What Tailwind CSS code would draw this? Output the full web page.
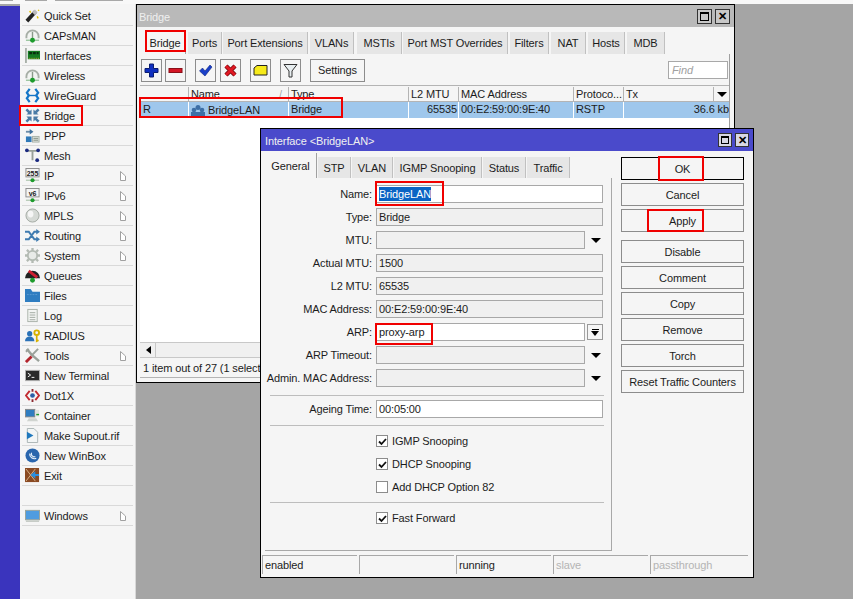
<!DOCTYPE html>
<html lang="en">
<head>
<meta charset="UTF-8">
<title>WinBox Bridge</title>
<script src="https://cdn.jsdelivr.net/npm/@tailwindcss/browser@4"></script>
</head>
<body class="bg-[#a5a5a5]">
<div class="relative w-[853px] h-[599px] overflow-hidden bg-[#a5a5a5] font-['Liberation_Sans',sans-serif] text-[11px] tracking-[-0.12px] leading-[14px] text-[#1c1c1c]">

  <!-- top strip -->
  <div class="h-[4px] bg-[#f8f8f8] flex items-start">
    <div class="w-[13px] h-[1px] bg-[#a8a8a8]"></div>
    <div class="w-[22px] h-[1px] ml-[12px] bg-[#a8a8a8]"></div>
    <div class="w-[68px] h-[1px] ml-[8px] bg-[#a8a8a8]"></div>
  </div>

  <div class="flex h-[595px]">
    <!-- blue rail -->
    <div class="w-[20px] mt-[2px] bg-[#3a34bd]"></div>
    <!-- main menu -->
    <div class="w-[116px] bg-[#f5f5f5] pt-[2px] px-[2px] border-r border-[#d8d8d8]">
      <div class="flex items-center h-[20px] border-b border-[#d9d9d9] pl-[3px]"><svg class="w-[15px] h-[15px] mr-[4px]" viewBox="0 0 16 16"><path d="M2 14L11 4" stroke="#222" stroke-width="4"/><path d="M9 6l3-3" stroke="#bbb" stroke-width="4"/><path d="M13 9l1 2M5 3l1 2M14 2l1 1" stroke="#e5c400" stroke-width="1.5"/></svg>Quick Set</div>
      <div class="flex items-center h-[20px] border-b border-[#d9d9d9] pl-[3px]"><svg class="w-[15px] h-[15px] mr-[4px]" viewBox="0 0 16 16"><path d="M1.500 11V9a6.500 6.500 0 0 1 13 0v2" fill="#f2f4f2" stroke="#a6aea6" stroke-width="2"/><path d="M8 4v8" stroke="#8a9a8a" stroke-width="1.5"/><path d="M1 13h14" stroke="#6fae74"/><circle cx="8" cy="13" r="2.600" fill="#1d9b2c"/></svg>CAPsMAN</div>
      <div class="flex items-center h-[20px] border-b border-[#d9d9d9] pl-[3px]"><svg class="w-[15px] h-[15px] mr-[4px]" viewBox="0 0 16 16"><path d="M1 0v16" stroke="#a8b0a8" stroke-width="2"/><rect x="3" y="3" width="13" height="9" fill="#157a22"/><path d="M4.500 5.500h10" stroke="#0a2d10" stroke-width="2.500" stroke-dasharray="3 1"/><path d="M4 11h11" stroke="#c9b13c" stroke-dasharray="1 1"/></svg>Interfaces</div>
      <div class="flex items-center h-[20px] border-b border-[#d9d9d9] pl-[3px]"><svg class="w-[15px] h-[15px] mr-[4px]" viewBox="0 0 16 16"><path d="M1.500 11V9a6.500 6.500 0 0 1 13 0v2" fill="#f2f4f2" stroke="#a6aea6" stroke-width="2"/><path d="M8 4v8" stroke="#8a9a8a" stroke-width="1.5"/><path d="M1 13h14" stroke="#6fae74"/><circle cx="8" cy="13" r="2.600" fill="#1d9b2c"/></svg>Wireless</div>
      <div class="flex items-center h-[20px] border-b border-[#d9d9d9] pl-[3px]"><svg class="w-[15px] h-[15px] mr-[4px]" viewBox="0 0 16 16"><path d="M5 1L2 5l2 3-2 3 3 4M11 1l3 4-2 3 2 3-3 4" fill="none" stroke="#1476c8" stroke-width="2.400"/><path d="M3 8h10" stroke="#1476c8" stroke-width="1.500"/></svg>WireGuard</div>
      <div class="flex items-center h-[20px] border-b border-[#d9d9d9] pl-[3px]"><svg class="w-[15px] h-[15px] mr-[4px]" viewBox="0 0 16 16" fill="#4a7ba6"><path d="M7 7H1.500L3.300 5.200 0.500 2.400 2.400 0.500 5.200 3.300 7 1.500z"/><path d="M9 7h5.500L12.700 5.200 15.500 2.400 13.600 0.500 10.800 3.300 9 1.500z"/><path d="M7 9H1.500L3.300 10.800 0.500 13.600 2.400 15.500 5.200 12.700 7 14.500z"/><path d="M9 9h5.500L12.700 10.800 15.500 13.600 13.600 15.500 10.800 12.700 9 14.500z"/></svg>Bridge</div>
      <div class="flex items-center h-[20px] border-b border-[#d9d9d9] pl-[3px]"><svg class="w-[15px] h-[15px] mr-[4px]" viewBox="0 0 16 16"><path d="M1 4h5" stroke="#6b8ca8" stroke-width="2"/><path d="M5 1l4 3-4 3z" fill="#3d6f9c"/><rect x="1" y="9" width="6" height="6" fill="#2f79b8"/><rect x="8" y="9" width="7" height="6" fill="#dfe5df" stroke="#a8b0a8"/><path d="M9 11h5M9 13h5" stroke="#7d8a7d"/></svg>PPP</div>
      <div class="flex items-center h-[20px] border-b border-[#d9d9d9] pl-[3px]"><svg class="w-[15px] h-[15px] mr-[4px]" viewBox="0 0 16 16"><path d="M2 3h12M8 3v10" stroke="#98a098" stroke-width="2"/><circle cx="2" cy="2.500" r="2" fill="#1b2a80"/><circle cx="14" cy="2.500" r="2" fill="#1b2a80"/><circle cx="13" cy="13" r="2" fill="#1b2a80"/></svg>Mesh</div>
      <div class="flex items-center h-[20px] border-b border-[#d9d9d9] pl-[3px]"><svg class="w-[15px] h-[15px] mr-[4px]" viewBox="0 0 16 16"><rect x="1" y="0.500" width="14" height="9" fill="#f4f4f4" stroke="#8a8a8a"/><text x="8" y="8" font-size="7.500" font-weight="700" text-anchor="middle" fill="#222">255</text><path d="M1 13h14" stroke="#9ab79a"/><circle cx="8" cy="13" r="2.200" fill="#1d9b2c"/></svg>IP<svg class="ml-auto mr-[7px] w-[6px] h-[10px]" viewBox="0 0 6 10"><path d="M0.500 0.500L5.500 5V9.500H0.500z" fill="#fff" stroke="#a0a0a0"/></svg></div>
      <div class="flex items-center h-[20px] border-b border-[#d9d9d9] pl-[3px]"><svg class="w-[15px] h-[15px] mr-[4px]" viewBox="0 0 16 16"><rect x="1" y="0.500" width="14" height="9" fill="#f4f4f4" stroke="#8a8a8a"/><text x="8" y="8" font-size="7.500" font-weight="700" text-anchor="middle" fill="#222">v6</text><path d="M1 13h14" stroke="#9ab79a"/><circle cx="8" cy="13" r="2.200" fill="#1d9b2c"/></svg>IPv6<svg class="ml-auto mr-[7px] w-[6px] h-[10px]" viewBox="0 0 6 10"><path d="M0.500 0.500L5.500 5V9.500H0.500z" fill="#fff" stroke="#a0a0a0"/></svg></div>
      <div class="flex items-center h-[20px] border-b border-[#d9d9d9] pl-[3px]"><svg class="w-[15px] h-[15px] mr-[4px]" viewBox="0 0 16 16"><circle cx="8" cy="8" r="7" fill="#d6dad6" stroke="#a3aaa3"/><ellipse cx="6" cy="6.500" rx="3" ry="3.600" fill="#f6f6f6"/></svg>MPLS<svg class="ml-auto mr-[7px] w-[6px] h-[10px]" viewBox="0 0 6 10"><path d="M0.500 0.500L5.500 5V9.500H0.500z" fill="#fff" stroke="#a0a0a0"/></svg></div>
      <div class="flex items-center h-[20px] border-b border-[#d9d9d9] pl-[3px]"><svg class="w-[15px] h-[15px] mr-[4px]" viewBox="0 0 16 16"><path d="M0 4h4l6 8h3M0 12h4l6-8h3" fill="none" stroke="#3f7bb0" stroke-width="2.200"/><path d="M12 1l4 3-4 3zM12 9l4 3-4 3z" fill="#3f7bb0"/></svg>Routing<svg class="ml-auto mr-[7px] w-[6px] h-[10px]" viewBox="0 0 6 10"><path d="M0.500 0.500L5.500 5V9.500H0.500z" fill="#fff" stroke="#a0a0a0"/></svg></div>
      <div class="flex items-center h-[20px] border-b border-[#d9d9d9] pl-[3px]"><svg class="w-[15px] h-[15px] mr-[4px]" viewBox="0 0 16 16"><circle cx="8" cy="8" r="5" fill="#e8ebe8" stroke="#b3bab3" stroke-width="2"/><path d="M8 0v3M8 13v3M0 8h3M13 8h3M2 2l2 2M12 12l2 2M14 2l-2 2M4 12l-2 2" stroke="#b3bab3" stroke-width="2.500"/></svg>System<svg class="ml-auto mr-[7px] w-[6px] h-[10px]" viewBox="0 0 6 10"><path d="M0.500 0.500L5.500 5V9.500H0.500z" fill="#fff" stroke="#a0a0a0"/></svg></div>
      <div class="flex items-center h-[20px] border-b border-[#d9d9d9] pl-[3px]"><svg class="w-[15px] h-[15px] mr-[4px]" viewBox="0 0 16 16"><path d="M0 11a8 8 0 0 1 16 0z" fill="#222"/><path d="M4 3l9 7" stroke="#cf2030" stroke-width="3"/><circle cx="8" cy="13" r="2.600" fill="#1d9b2c"/></svg>Queues</div>
      <div class="flex items-center h-[20px] border-b border-[#d9d9d9] pl-[3px]"><svg class="w-[15px] h-[15px] mr-[4px]" viewBox="0 0 16 16"><path d="M0 1h6l2 3h8v11H0z" fill="#2f7dc1"/><path d="M2 7h12" stroke="#5b9bd2" stroke-dasharray="2 1"/></svg>Files</div>
      <div class="flex items-center h-[20px] border-b border-[#d9d9d9] pl-[3px]"><svg class="w-[15px] h-[15px] mr-[4px]" viewBox="0 0 16 16"><rect x="3" y="1.500" width="10" height="13" fill="#f3f5f3" stroke="#a8b0a8"/><path d="M5 5h6M5 7.500h6M5 10h6M5 12.500h6" stroke="#a0a8a0"/></svg>Log</div>
      <div class="flex items-center h-[20px] border-b border-[#d9d9d9] pl-[3px]"><svg class="w-[15px] h-[15px] mr-[4px]" viewBox="0 0 16 16"><circle cx="5" cy="6" r="2.800" fill="#2b72b8"/><path d="M0 14a5 5 0 0 1 10 0z" fill="#2b72b8"/><circle cx="12.500" cy="5" r="2.500" fill="none" stroke="#d8b200" stroke-width="2"/><path d="M12.500 8v6l2-1" fill="none" stroke="#d8b200" stroke-width="1.800"/></svg>RADIUS</div>
      <div class="flex items-center h-[20px] border-b border-[#d9d9d9] pl-[3px]"><svg class="w-[15px] h-[15px] mr-[4px]" viewBox="0 0 16 16"><path d="M2 1l5 6 8 7" stroke="#9aa19a" stroke-width="2.500" fill="none"/><path d="M1 4l3-3" stroke="#9aa19a" stroke-width="2"/><path d="M14 1L7 8" stroke="#9aa19a" stroke-width="2"/><path d="M7 9l-6 6" stroke="#b3242c" stroke-width="3"/></svg>Tools<svg class="ml-auto mr-[7px] w-[6px] h-[10px]" viewBox="0 0 6 10"><path d="M0.500 0.500L5.500 5V9.500H0.500z" fill="#fff" stroke="#a0a0a0"/></svg></div>
      <div class="flex items-center h-[20px] border-b border-[#d9d9d9] pl-[3px]"><svg class="w-[15px] h-[15px] mr-[4px]" viewBox="0 0 16 16"><rect x="0.500" y="2.500" width="15" height="11" fill="#2a2a2a" stroke="#b3b3b3"/><path d="M3 5.500l3 2-3 2M7 10h3" fill="none" stroke="#fff"/></svg>New Terminal</div>
      <div class="flex items-center h-[20px] border-b border-[#d9d9d9] pl-[3px]"><svg class="w-[15px] h-[15px] mr-[4px]" viewBox="0 0 16 16"><path d="M5 3L1 8l4 5M11 3l4 5-4 5" fill="none" stroke="#c22a30" stroke-width="2"/><path d="M8 1v3M8 12v3" stroke="#8c2a30" stroke-width="2"/><circle cx="8" cy="8" r="2.500" fill="#2b5fa8"/></svg>Dot1X</div>
      <div class="flex items-center h-[20px] border-b border-[#d9d9d9] pl-[3px]"><svg class="w-[15px] h-[15px] mr-[4px]" viewBox="0 0 16 16"><rect x="0.500" y="1.500" width="10" height="8" fill="#2f7dc1" stroke="#888"/><rect x="11" y="2" width="4" height="7" fill="#e0e4e0"/><path d="M12 7h3" stroke="#1d9b2c" stroke-width="1.500"/><path d="M2 14l2-3h8l2 3z" fill="#d0d4d0"/></svg>Container</div>
      <div class="flex items-center h-[20px] border-b border-[#d9d9d9] pl-[3px]"><svg class="w-[15px] h-[15px] mr-[4px]" viewBox="0 0 16 16"><path d="M2.500 0.500h7l4 4v11h-11z" fill="#f2f5f5" stroke="#a9b3b3"/><path d="M2 4l7 4-7 4z" fill="#1f78bd"/></svg>Make Supout.rif</div>
      <div class="flex items-center h-[20px] border-b border-[#d9d9d9] pl-[3px]"><svg class="w-[15px] h-[15px] mr-[4px]" viewBox="0 0 16 16"><circle cx="8" cy="8" r="7.500" fill="#2a66ad"/><path d="M5 6a5 5 0 0 0 7 5M7 5a3 3 0 0 0 4 4" fill="none" stroke="#e4eef8" stroke-width="1.300"/></svg>New WinBox</div>
      <div class="flex items-center h-[20px] border-b border-[#d9d9d9] pl-[3px]"><svg class="w-[15px] h-[15px] mr-[4px]" viewBox="0 0 16 16"><rect width="15" height="15" fill="#8a4a22"/><path d="M1 1l5 6.500L1 14M11 1L6 7.500 11 14" fill="none" stroke="#d9b48c"/><path d="M6 7.500l5-4v3h4v2h-4v3z" fill="#2a8fe0"/></svg>Exit</div>
      <div class="h-[20px] border-b border-[#d9d9d9]"></div>
      <div class="flex items-center h-[20px] border-b border-[#d9d9d9] pl-[3px]"><svg class="w-[15px] h-[15px] mr-[4px]" viewBox="0 0 16 16"><rect x="0.500" y="2.500" width="15" height="10" fill="#4f9ce0" stroke="#9aa39a"/><path d="M1 14h14" stroke="#a8b0a8"/></svg>Windows<svg class="ml-auto mr-[7px] w-[6px] h-[10px]" viewBox="0 0 6 10"><path d="M0.500 0.500L5.500 5V9.500H0.500z" fill="#fff" stroke="#a0a0a0"/></svg></div>
    </div>
  </div>

  <!-- Bridge window -->
  <div class="absolute left-[136px] top-[4px] w-[599px] h-[379px] bg-[#f5f5f5] border border-black flex flex-col">
    <div class="h-[22px] bg-[#b9b9b9] text-[#efefef] flex items-center pl-[2px] pr-[4px]">
      <span class="pt-[2px]">Bridge</span>
      <div class="ml-auto flex gap-[3px]">
        <div class="w-[15px] h-[15px] border border-[#333] bg-[#c8c8c8] flex items-center justify-center"><div class="w-[9px] h-[9px] border border-black border-t-2"></div></div>
        <div class="w-[15px] h-[15px] border border-[#333] bg-[#c8c8c8] flex items-center justify-center font-bold leading-none text-black">✕</div>
      </div>
    </div>
    <!-- tabs -->
    <div class="flex h-[22px] mt-[5px] ml-[8px] items-end">
      <div class="h-[22px] w-[41px] bg-[#f5f5f5] border-r border-[#a0a0a0] flex items-center justify-center">Bridge</div>
      <div class="h-[22px] w-[34px] ml-[2px] bg-[#e6e6e6] border-r border-[#c0c0c0] flex items-center justify-center">Ports</div>
      <div class="h-[22px] w-[85px] ml-[1px] bg-[#e6e6e6] border-r border-[#c0c0c0] flex items-center justify-center">Port Extensions</div>
      <div class="h-[22px] w-[44px] ml-[2px] bg-[#e6e6e6] border-r border-[#c0c0c0] flex items-center justify-center">VLANs</div>
      <div class="h-[22px] w-[45px] ml-[3px] bg-[#e6e6e6] border-r border-[#c0c0c0] flex items-center justify-center">MSTIs</div>
      <div class="h-[22px] w-[105px] ml-[1px] bg-[#e6e6e6] border-r border-[#c0c0c0] flex items-center justify-center">Port MST Overrides</div>
      <div class="h-[22px] w-[39px] ml-[2px] bg-[#e6e6e6] border-r border-[#c0c0c0] flex items-center justify-center">Filters</div>
      <div class="h-[22px] w-[35px] ml-[2px] bg-[#e6e6e6] border-r border-[#c0c0c0] flex items-center justify-center">NAT</div>
      <div class="h-[22px] w-[37px] ml-[2px] bg-[#e6e6e6] border-r border-[#c0c0c0] flex items-center justify-center">Hosts</div>
      <div class="h-[22px] w-[38px] ml-[2px] bg-[#e6e6e6] border-r border-[#c0c0c0] flex items-center justify-center">MDB</div>
    </div>
    <!-- toolbar -->
    <div class="h-[31px] ml-[4px] mr-[4px] border-r border-[#a0a0a0] flex items-center pt-[1px]">
      <div class="w-[21px] h-[23px] border border-[#8c8c8c] flex items-center justify-center"><svg class="w-[15px] h-[15px]" viewBox="0 0 15 15"><path d="M5.500 1h4v4.500H14v4H9.500V14h-4V9.500H1v-4h4.500z" fill="#0f2fc0" stroke="#0a1d70"/></svg></div>
      <div class="w-[21px] h-[23px] ml-[3px] border border-[#8c8c8c] flex items-center justify-center"><svg class="w-[15px] h-[15px]" viewBox="0 0 15 15"><rect x="1" y="5.500" width="13" height="4" fill="#d41525" stroke="#8a0f18"/></svg></div>
      <div class="w-[21px] h-[23px] ml-[9px] border border-[#8c8c8c] flex items-center justify-center"><svg class="w-[15px] h-[15px]" viewBox="0 0 15 15"><path d="M1.500 8l3-3 2.500 3L12 2l2 2-7 9z" fill="#1a3fc8" stroke="#0d2480" stroke-width="0.600"/></svg></div>
      <div class="w-[21px] h-[23px] ml-[4px] border border-[#8c8c8c] flex items-center justify-center"><svg class="w-[15px] h-[15px]" viewBox="0 0 15 15"><path d="M3 3l9 9M12 3l-9 9" stroke="#7a0c12" stroke-width="4.500"/><path d="M3 3l9 9M12 3l-9 9" stroke="#e01822" stroke-width="2.800"/></svg></div>
      <div class="w-[21px] h-[23px] ml-[9px] border border-[#8c8c8c] flex items-center justify-center"><svg class="w-[15px] h-[15px]" viewBox="0 0 15 15"><path d="M1 5l3-2.500h10V12H1z" fill="#f6ea1a" stroke="#222"/></svg></div>
      <div class="w-[21px] h-[23px] ml-[9px] border border-[#8c8c8c] flex items-center justify-center"><svg class="w-[15px] h-[15px]" viewBox="0 0 15 15"><path d="M1 1.500h13L9 8v6H6V8z" fill="#e8eef0" stroke="#333"/></svg></div>
      <div class="w-[55px] h-[23px] ml-[9px] border border-[#8c8c8c] flex items-center justify-center">Settings</div>
      <div class="w-[60px] h-[18px] ml-auto mr-[1px] border border-[#a8a8a8] bg-white text-[#a0a0a0] italic pl-[3px] flex items-center">Find</div>
    </div>
    <!-- table -->
    <div class="ml-[3px] w-[590px] h-[273px] bg-white border-r border-[#a0a0a0] flex flex-col">
      <div class="flex h-[17px] border-y border-[#b4b4b4] bg-[#f5f5f5] pt-[1px]">
        <div class="w-[49px] border-r border-[#b4b4b4]"></div>
        <div class="w-[100px] border-r border-[#b4b4b4] pl-[2px] flex justify-between pr-[6px]">Name<span class="text-[#999] text-[9px]">/</span></div>
        <div class="w-[120px] border-r border-[#b4b4b4] pl-[2px]">Type</div>
        <div class="w-[50px] border-r border-[#b4b4b4] pl-[2px]">L2 MTU</div>
        <div class="w-[115px] border-r border-[#b4b4b4] pl-[2px]">MAC Address</div>
        <div class="w-[50px] border-r border-[#b4b4b4] pl-[2px]">Protoco...</div>
        <div class="w-[90px] border-r border-[#b4b4b4] pl-[2px]">Tx</div>
        <div class="flex-1 flex items-center justify-center"><div class="w-0 h-0 border-x-[5px] border-x-transparent border-t-[5px] border-t-black"></div></div>
      </div>
      <div class="flex h-[16px] bg-[#9fc7ec]">
        <div class="w-[49px] border-r border-white pl-[3px]">R</div>
        <div class="w-[100px] border-r border-white pl-[2px] flex items-center gap-[3px]"><svg class="w-[14px] h-[11px]" viewBox="0 0 14 11" fill="#3d6fa6"><circle cx="7" cy="2.500" r="2.500"/><circle cx="3" cy="5" r="2.300"/><circle cx="11" cy="5" r="2.300"/><rect x="0" y="7" width="14" height="4"/></svg><span>BridgeLAN</span></div>
        <div class="w-[120px] border-r border-white pl-[2px]">Bridge</div>
        <div class="w-[50px] border-r border-white pr-[1px] text-right">65535</div>
        <div class="w-[115px] border-r border-white pl-[2px]">00:E2:59:00:9E:40</div>
        <div class="w-[50px] border-r border-white pl-[2px]">RSTP</div>
        <div class="flex-1 text-right overflow-hidden whitespace-nowrap">36.6 kb</div>
      </div>
      <div class="flex-1"></div>
      <div class="h-[16px] bg-[#f0f0f0] border-y border-[#c8c8c8] flex items-center">
        <div class="w-[14px] h-[14px] ml-[2px] border-r border-[#c8c8c8] flex items-center justify-center"><div class="w-0 h-0 border-y-[4px] border-y-transparent border-r-[5px] border-r-black"></div></div>
      </div>
    </div>
    <div class="mx-[3px] h-[20px] flex items-center pl-[3px] border-b border-[#b4b4b4] whitespace-nowrap overflow-hidden">1 item out of 27 (1 selected)</div>
  </div>

  <!-- Interface dialog -->
  <div class="absolute left-[260px] top-[128px] w-[494px] h-[450px] bg-[#f5f5f5] border border-black flex flex-col">
    <div class="h-[22px] bg-[#4a4acb] text-[#f0f0f0] flex items-center pl-[4px] pr-[4px]">
      <span class="pt-[2px]">Interface &lt;BridgeLAN&gt;</span>
      <div class="ml-auto flex gap-[3px]">
        <div class="w-[14px] h-[14px] border border-[#333] bg-[#d8d8e4] flex items-center justify-center"><div class="w-[8px] h-[8px] border border-black border-t-2"></div></div>
        <div class="w-[14px] h-[14px] border border-[#333] bg-[#d8d8e4] flex items-center justify-center font-bold leading-none text-black">✕</div>
      </div>
    </div>
    <div class="flex flex-1">
      <!-- left side -->
      <div class="w-[351px] pl-[4px]">
        <div class="flex h-[27px] items-end">
          <div class="h-[25px] w-[52px] bg-[#f5f5f5] border-r border-[#a0a0a0] flex items-center justify-center">General</div>
          <div class="h-[21px] w-[33px] ml-[1px] bg-[#e6e6e6] border-r border-[#c0c0c0] flex items-center justify-center">STP</div>
          <div class="h-[21px] w-[41px] ml-[1px] bg-[#e6e6e6] border-r border-[#c0c0c0] flex items-center justify-center">VLAN</div>
          <div class="h-[21px] w-[88px] ml-[1px] bg-[#e6e6e6] border-r border-[#c0c0c0] flex items-center justify-center">IGMP Snooping</div>
          <div class="h-[21px] w-[43px] ml-[1px] bg-[#e6e6e6] border-r border-[#c0c0c0] flex items-center justify-center">Status</div>
          <div class="h-[21px] w-[43px] ml-[1px] bg-[#e6e6e6] border-r border-[#c0c0c0] flex items-center justify-center">Traffic</div>
        </div>
        <div class="h-[373px] border-r border-b border-[#a8a8a8] pt-[7px] flex flex-col">
          <div class="flex items-center h-[18px] mb-[5px]"><div class="w-[111px] text-right pr-[4px]">Name:</div><div class="w-[227px] h-[18px] border border-[#a8a8a8] bg-white pl-[2px] flex items-center"><span class="bg-[#0a64c4] text-white">BridgeLAN</span></div></div>
          <div class="flex items-center h-[18px] mb-[5px]"><div class="w-[111px] text-right pr-[4px]">Type:</div><div class="w-[227px] h-[18px] border border-[#a8a8a8] bg-[#f0f0f0] pl-[2px] flex items-center">Bridge</div></div>
          <div class="flex items-center h-[18px] mb-[5px]"><div class="w-[111px] text-right pr-[4px]">MTU:</div><div class="w-[209px] h-[18px] border border-[#a8a8a8] bg-[#f0f0f0]"></div><div class="ml-[6px] w-0 h-0 border-x-[5px] border-x-transparent border-t-[5px] border-t-black"></div></div>
          <div class="flex items-center h-[18px] mb-[5px]"><div class="w-[111px] text-right pr-[4px]">Actual MTU:</div><div class="w-[227px] h-[18px] border border-[#a8a8a8] bg-[#f0f0f0] pl-[2px] flex items-center">1500</div></div>
          <div class="flex items-center h-[18px] mb-[5px]"><div class="w-[111px] text-right pr-[4px]">L2 MTU:</div><div class="w-[227px] h-[18px] border border-[#a8a8a8] bg-[#f0f0f0] pl-[2px] flex items-center">65535</div></div>
          <div class="flex items-center h-[18px] mb-[5px]"><div class="w-[111px] text-right pr-[4px]">MAC Address:</div><div class="w-[227px] h-[18px] border border-[#a8a8a8] bg-[#f0f0f0] pl-[2px] flex items-center">00:E2:59:00:9E:40</div></div>
          <div class="flex items-center h-[18px] mb-[5px]"><div class="w-[111px] text-right pr-[4px]">ARP:</div><div class="w-[209px] h-[18px] border border-[#a8a8a8] bg-white pl-[2px] flex items-center">proxy-arp</div><div class="ml-[2px] w-[16px] h-[16px] border border-[#999] flex flex-col items-center justify-center"><div class="w-[7px] h-[1px] bg-black mb-[1px]"></div><div class="w-0 h-0 border-x-[4px] border-x-transparent border-t-[5px] border-t-black"></div></div></div>
          <div class="flex items-center h-[18px] mb-[5px]"><div class="w-[111px] text-right pr-[4px]">ARP Timeout:</div><div class="w-[209px] h-[18px] border border-[#a8a8a8] bg-[#f0f0f0]"></div><div class="ml-[6px] w-0 h-0 border-x-[5px] border-x-transparent border-t-[5px] border-t-black"></div></div>
          <div class="flex items-center h-[18px] mb-[8px]"><div class="w-[111px] text-right pr-[4px] whitespace-nowrap">Admin. MAC Address:</div><div class="w-[209px] h-[18px] border border-[#a8a8a8] bg-[#f0f0f0]"></div><div class="ml-[6px] w-0 h-0 border-x-[5px] border-x-transparent border-t-[5px] border-t-black"></div></div>
          <div class="h-[1px] bg-[#bdbdbd] ml-[5px] mr-[7px] mb-[4px]"></div>
          <div class="flex items-center h-[18px] mb-[7px]"><div class="w-[111px] text-right pr-[4px]">Ageing Time:</div><div class="w-[227px] h-[18px] border border-[#a8a8a8] bg-white pl-[2px] flex items-center">00:05:00</div></div>
          <div class="h-[1px] bg-[#bdbdbd] ml-[5px] mr-[7px] mb-[9px]"></div>
          <div class="flex items-center h-[12px] mb-[11px] pl-[111px]"><div class="w-[12px] h-[12px] border border-[#8c8c8c] bg-white mr-[4px] flex items-center justify-center"><svg class="w-[9px] h-[9px]" viewBox="0 0 9 9"><path d="M1 4.500l2.500 2.500L8 2" fill="none" stroke="#111" stroke-width="1.800"/></svg></div>IGMP Snooping</div>
          <div class="flex items-center h-[12px] mb-[11px] pl-[111px]"><div class="w-[12px] h-[12px] border border-[#8c8c8c] bg-white mr-[4px] flex items-center justify-center"><svg class="w-[9px] h-[9px]" viewBox="0 0 9 9"><path d="M1 4.500l2.500 2.500L8 2" fill="none" stroke="#111" stroke-width="1.800"/></svg></div>DHCP Snooping</div>
          <div class="flex items-center h-[12px] mb-[9px] pl-[111px]"><div class="w-[12px] h-[12px] border border-[#8c8c8c] bg-white mr-[4px]"></div>Add DHCP Option 82</div>
          <div class="h-[1px] bg-[#bdbdbd] ml-[5px] mr-[7px] mb-[9px]"></div>
          <div class="flex items-center h-[12px] pl-[111px]"><div class="w-[12px] h-[12px] border border-[#8c8c8c] bg-white mr-[4px] flex items-center justify-center"><svg class="w-[9px] h-[9px]" viewBox="0 0 9 9"><path d="M1 4.500l2.500 2.500L8 2" fill="none" stroke="#111" stroke-width="1.800"/></svg></div>Fast Forward</div>
        </div>
      </div>
      <!-- buttons -->
      <div class="ml-[9px] w-[123px] pt-[6px] flex flex-col">
        <div class="h-[23px] border border-black flex items-center justify-center mb-[3px]">OK</div>
        <div class="h-[23px] border border-[#8c8c8c] flex items-center justify-center mb-[3px]">Cancel</div>
        <div class="h-[23px] border border-[#8c8c8c] flex items-center justify-center mb-[8px]">Apply</div>
        <div class="h-[23px] border border-[#8c8c8c] flex items-center justify-center mb-[3px]">Disable</div>
        <div class="h-[23px] border border-[#8c8c8c] flex items-center justify-center mb-[3px]">Comment</div>
        <div class="h-[23px] border border-[#8c8c8c] flex items-center justify-center mb-[3px]">Copy</div>
        <div class="h-[23px] border border-[#8c8c8c] flex items-center justify-center mb-[3px]">Remove</div>
        <div class="h-[23px] border border-[#8c8c8c] flex items-center justify-center mb-[3px]">Torch</div>
        <div class="h-[23px] border border-[#8c8c8c] flex items-center justify-center">Reset Traffic Counters</div>
      </div>
    </div>
    <!-- status bar -->
    <div class="flex gap-[2px] h-[19px] mb-[3px] ml-[1px] mr-[5px]">
      <div class="w-[95px] border-t border-l border-[#a8a8a8] pl-[2px] flex items-center">enabled</div>
      <div class="w-[95px] border-t border-l border-[#a8a8a8]"></div>
      <div class="w-[95px] border-t border-l border-[#a8a8a8] pl-[2px] flex items-center">running</div>
      <div class="w-[95px] border-t border-l border-[#a8a8a8] pl-[2px] flex items-center text-[#b4b4b4]">slave</div>
      <div class="flex-1 border-t border-l border-[#a8a8a8] pl-[2px] flex items-center text-[#b4b4b4]">passthrough</div>
    </div>
  </div>

  <!-- red annotation boxes -->
  <div class="absolute left-[19px] top-[105px] w-[64px] h-[21px] border-[2px] border-[#f00000]"></div>
  <div class="absolute left-[145px] top-[30px] w-[41px] h-[22px] border-[2px] border-[#f00000]"></div>
  <div class="absolute left-[139px] top-[97px] w-[204px] h-[21px] border-[2px] border-[#f00000]"></div>
  <div class="absolute left-[375px] top-[181px] w-[69px] h-[25px] border-[2px] border-[#f00000]"></div>
  <div class="absolute left-[375px] top-[323px] w-[58px] h-[22px] border-[2px] border-[#f00000]"></div>
  <div class="absolute left-[658px] top-[156px] w-[46px] h-[25px] border-[2px] border-[#f00000]"></div>
  <div class="absolute left-[647px] top-[209px] w-[57px] h-[23px] border-[2px] border-[#f00000]"></div>
</div>
</body>
</html>
